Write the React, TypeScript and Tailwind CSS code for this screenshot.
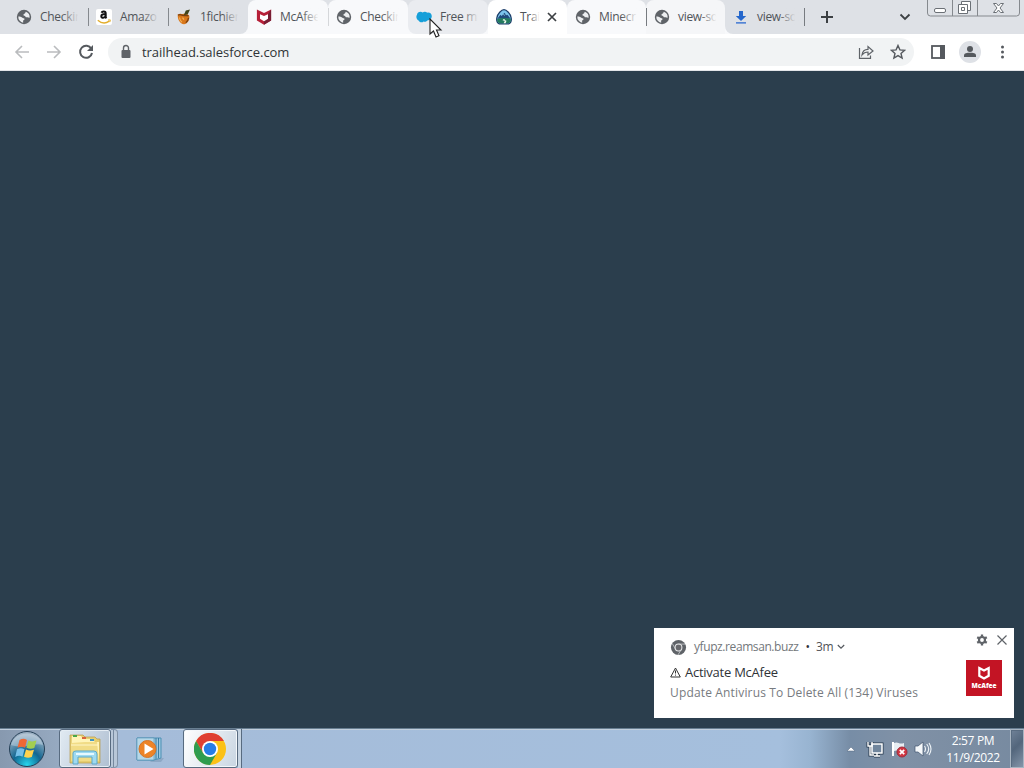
import React from "react";

const Globe = () => (
  <svg viewBox="0 0 16 16" className="h-4 w-4">
    <circle cx="8" cy="8" r="7.2" fill="#5f6368" />
    <path d="M9.800 2.700a5.700 5.700 0 0 1 3.800 6c-1 .1-1.500-.6-2.500-.4-1.300.2-1.800-.4-1.900-1.300-1.500 0-2-.7-1.600-1.700.3-.7 1.200-.5 1.500-1.100Z" fill="#eceef0" />
    <path d="M2.300 7.600c1.700.1 2.700.1 3.700.8 1 .8 2.400.6 2.600 1.700.1 1-1.400 1-1.500 1.900l.1 1.700a5.800 5.800 0 0 1-4.900-6.100Z" fill="#eceef0" />
  </svg>
);

const Amazon = () => (
  <svg viewBox="0 0 16 16" className="h-4 w-4">
    <rect width="16" height="16" rx="2" fill="#fff" />
    <path d="M5.600 3.700C6 2.200 9.700 2 9.700 4.500v3.200c0 .8.3 1.100.8 1.600M9.500 5C7 5 5.300 5.600 5.300 7.300c0 2.200 3.500 2 4.300-.3" fill="none" stroke="#111" strokeWidth="2" />
    <path d="M1.800 11.200c3.500 3.200 8.100 3.200 11.500 1" fill="none" stroke="#e3ae2d" strokeWidth="1.400" />
    <path d="m12 11 2.300-.1-.5 2.200" fill="none" stroke="#e3ae2d" />
  </svg>
);

const Orange = () => (
  <svg viewBox="0 0 16 16" className="h-4 w-4">
    <path d="M1.800 5.800c1.800-1.600 3.400-1.200 5-.7l3.600-.8 2.900 2.500c.6 3.800-1.400 8-5.300 8.500C4 15 1.300 10.300 1.800 5.800Z" fill="#d9781c" />
    <path d="M7.800 6.300 9.800 1.600l4.200-1-2.200 4.600Z" fill="#41451d" />
    <path d="M2 6.300c1.600-1.500 3.200-.4 5.200.1 2.200.6 3.600-.5 5.400.6M9.800 13.700c1.700-1.200 2.500-3 2.700-5" fill="none" stroke="#7d4210" strokeWidth="1.300" />
    <path d="M3.500 8.500c.2 2.200 1 3.500 2.400 4.600M6.500 8.600l1.500 2" fill="none" stroke="#f4b35a" strokeWidth="1.200" />
  </svg>
);

const Shield = () => (
  <svg viewBox="0 0 16 16" className="h-4 w-4">
    <path d="m.9.5 7.100 3.400L15.100.5v11.100L8 15.700.9 11.600Z" fill="#b62038" />
    <path d="m8 12.200 4-2.400V5.200L15.100.5v11.100L8 15.700Z" fill="#781e34" />
    <path d="M4 5.200 8 7l4-1.800v4.600l-4 2.400-4-2.400Z" fill="#fff" />
  </svg>
);

const Cloud = () => (
  <svg viewBox="0 0 16 16" className="h-4 w-4">
    <path d="M1 5.800C1.100 3 4.800 2 6.600 3.400c1.700-1.200 3.600-.8 4.600.3 2.500-.6 4.600 1 4.600 3.600 0 2.800-2.100 4.100-4.400 4.100-1.200 1.500-2.800 1.400-3.800 1-1.400 1.500-4.300 1-5-.9C.7 10.900-.4 7.600 1 5.800Z" fill="#159fd9" />
  </svg>
);

const Trail = () => (
  <svg viewBox="0 0 16 16" className="h-4 w-4">
    <path d="M8 .7c2.400 0 6.700 4.100 7.200 8.300.4 2.700-.2 4.900-2.200 5.800H3C1 13.900.4 11.700.8 9 1.300 4.800 5.600.7 8 .7Z" fill="#7cc3ec" stroke="#1b3c68" strokeWidth="1.200" />
    <path d="m1.400 9.800 3-4 1.300 1.100L8.400 3.700l2.200 2.600.9-.5 3.200 4Z" fill="#214a7c" />
    <path d="m7.200 5.400 1.200.8 1-.6" stroke="#9fd8ef" fill="none" strokeWidth=".8" />
    <path d="M1.200 9.700 8 9l6.800.7-.2 2.700-1.800 1.900H3.200l-1.800-1.900Z" fill="#247b5d" />
    <path d="m7.700 10-1.200 1.200 2.300.9-1.200 2.200h2l.9-2.500-2.100-.8.5-1Z" fill="#f1f9ee" />
  </svg>
);

const Download = () => (
  <svg viewBox="0 0 16 16" className="h-4 w-4">
    <path d="M6 2h4v5h3.200L8 12 2.800 7H6Z" fill="#2567cc" />
    <path d="M3 13h10v1.700H3Z" fill="#5485d5" />
  </svg>
);

const tabs = [
  { icon: <Globe />, label: "Checkin", bg: "", fade: "to-[#dee1e6]", sep: "border-[#85898e]" },
  { icon: <Amazon />, label: "Amazo", bg: "", fade: "to-[#dee1e6]", sep: "border-[#85898e]" },
  { icon: <Orange />, label: "1fichier", bg: "bg-[#dee1e6] rounded-br-lg", fade: "to-[#dee1e6]", sep: "border-transparent" },
  { icon: <Shield />, label: "McAfee", bg: "bg-[#f8f9fb] rounded-t-lg", fade: "to-[#f8f9fb]", sep: "border-[#d5d7da]" },
  { icon: <Globe />, label: "Checkin", bg: "bg-[#f8f9fb] rounded-t-lg", fade: "to-[#f8f9fb]", sep: "border-transparent" },
  { icon: <Cloud />, label: "Free mi", bg: "bg-[#eaecf0] rounded-lg", fade: "to-[#eaecf0]", sep: "border-transparent" },
  { icon: <Trail />, label: "Trai", bg: "bg-white rounded-t-lg", fade: "to-white", sep: "border-transparent", active: true },
  { icon: <Globe />, label: "Minecr", bg: "bg-[#f8f9fb] rounded-t-lg", fade: "to-[#f8f9fb]", sep: "border-[#777b80]" },
  { icon: <Globe />, label: "view-so", bg: "bg-[#f5f6f8] rounded-t-lg", fade: "to-[#f5f6f8]", sep: "border-transparent" },
  { icon: <Download />, label: "view-so", bg: "bg-[#dee1e6] rounded-bl-lg", fade: "to-[#dee1e6]", sep: "border-[#777b80]" },
];

function TabStrip() {
  return (
    <div className="flex h-[34px] shrink-0 bg-[#dee1e6] pl-2">
      {tabs.map((t, i) => (
        <div key={i} className={`flex shrink-0 ${i < 6 ? "w-[80px]" : "w-[79px]"} ${i >= 2 ? "bg-[linear-gradient(#dee1e6_8px,#f8f9fb_8px)]" : ""}`}>
          <div className={`relative flex min-w-0 flex-1 items-center pl-2 ${t.bg}`}>
            <div className="shrink-0">{t.icon}</div>
            <div className={`relative ml-2 whitespace-nowrap text-[12px] leading-[18px] tracking-[-0.3px] text-[#505459] ${t.active ? "w-[19px]" : "w-[40px]"}`}>
              {t.label}
              <span className={`absolute inset-y-0 right-[-4px] bg-gradient-to-r from-transparent to-75% ${t.active ? "w-[13px]" : "w-[22px]"} ${t.fade}`} />
            </div>
            {t.active && (
              <svg className="relative ml-[7px] h-3 w-3 shrink-0" viewBox="0 0 12 12"><path d="m2 2 8 8M10 2l-8 8" stroke="#3c4043" strokeWidth="1.700" /></svg>
            )}
            <span className={`absolute right-[-1px] top-2 z-10 h-[18px] border-l ${t.sep}`} />
          </div>
        </div>
      ))}
      <svg className="ml-[15px] mt-[9px] h-4 w-4 shrink-0" viewBox="0 0 16 16"><path d="M8 2v12M2 8h12" stroke="#3c4043" strokeWidth="2" /></svg>
      <svg className="ml-[62px] mt-[9px] h-4 w-4 shrink-0" viewBox="0 0 16 16"><path d="m3.500 5.500 4.500 4.500 4.500-4.500" fill="none" stroke="#3c4043" strokeWidth="1.800" /></svg>
      <svg className="ml-[14px] h-[17px] w-[93px] shrink-0" viewBox="0 0 93 17" fill="none" stroke="#6b7076">
        <path d="M.5 0v13a3 3 0 0 0 3 3h86a3 3 0 0 0 3-3V0M25.500 0v16M50.500 0v16" stroke="#85898e" />
        <rect x="7.500" y="8.500" width="11" height="4" rx="1.500" fill="#fff" />
        <path d="M34.500 1.500h9v9h-9Z" fill="#fff" />
        <path d="M31.500 4.500h9v9h-9Z" fill="#fff" />
        <path d="M34.500 7.500h3v3h-3Z" />
        <path d="M66.500 3.500h3l2 2.500 2-2.500h3L73 8l3.500 4.500h-3l-2-2.500-2 2.500h-3L70 8Z" fill="#fff" />
      </svg>
    </div>
  );
}

function Toolbar() {
  return (
    <div className="flex h-[37px] shrink-0 items-center border-b border-[#e2e5e8] bg-white pl-[14px]">
      <svg className="h-4 w-4" viewBox="0 0 16 16"><path d="M15 8H2M8 2 2 8l6 6" fill="none" stroke="#babcbe" strokeWidth="1.600" /></svg>
      <svg className="ml-4 h-4 w-4" viewBox="0 0 16 16"><path d="M1 8h13M8 2l6 6-6 6" fill="none" stroke="#babcbe" strokeWidth="1.600" /></svg>
      <svg className="ml-4 h-4 w-4" viewBox="0 0 16 16"><path d="M13.300 4.800A6 6 0 1 0 14 9" fill="none" stroke="#55595e" strokeWidth="2" /><path d="M15 1v6H9Z" fill="#55595e" /></svg>
      <div className="ml-[14px] flex h-7 w-[806px] items-center rounded-full bg-[#f1f3f4] pl-[10px] pr-[8px]">
        <svg className="h-4 w-4" viewBox="0 0 16 16"><path d="M5.500 7V4a2.500 2.500 0 0 1 5 0v3" fill="none" stroke="#5f6368" strokeWidth="1.400" /><rect x="3.500" y="6" width="9" height="8" rx="1" fill="#5f6368" /></svg>
        <span className="ml-[8px] whitespace-nowrap text-[13px] leading-5 tracking-[-0.04px] text-[#303337]">trailhead.salesforce.com</span>
        <svg className="ml-auto h-4 w-4" viewBox="0 0 16 16" fill="none" stroke="#5f6368" strokeWidth="1.200"><path d="M1.500 4v10.400h11V11.500M4 11c.5-4 2.500-5.600 6-5.600V2.500L15 7l-5 4V8C7.500 8 5.500 9 4 11Z" /></svg>
        <svg className="ml-4 h-4 w-4" viewBox="0 0 16 16"><path d="m8 1.500 1.900 4.400 4.700.4L11 9.400l1.100 4.700L8 11.600l-4.100 2.500L5 9.400 1.400 6.300l4.700-.4Z" fill="none" stroke="#55595e" strokeWidth="1.400" /></svg>
      </div>
      <svg className="ml-4 h-4 w-4" viewBox="0 0 16 16"><rect x="2" y="2" width="12" height="12" fill="#fff" stroke="#55595e" strokeWidth="1.800" /><path d="M10 1h5v14h-5Z" fill="#55595e" /></svg>
      <div className="ml-[13px] flex h-[22px] w-[22px] items-center justify-center rounded-full bg-[#dee1e6]">
        <svg className="h-4 w-4" viewBox="0 0 16 16" fill="#55595e"><circle cx="8" cy="5" r="3" /><path d="M2 13v-1.500C2 9 5 8.700 8 8.700s6 .3 6 2.800V13Z" /></svg>
      </div>
      <svg className="ml-[13px] h-4 w-4" viewBox="0 0 16 16" fill="#55595e"><circle cx="8.500" cy="3" r="1.500" /><circle cx="8.500" cy="8" r="1.500" /><circle cx="8.500" cy="13" r="1.500" /></svg>
    </div>
  );
}

function Notification() {
  return (
    <section className="absolute bottom-[50px] right-[10px] flex h-[90px] w-[360px] bg-white pl-4 pr-3">
      <div className="min-w-0 flex-1 whitespace-nowrap">
        <div className="mt-[9px] flex h-5 items-center text-[12px] text-[#73777b]">
          <svg className="mr-[7px] h-[17px] w-[17px]" viewBox="0 0 18 18"><circle cx="9" cy="9" r="8" fill="#5f6368" /><circle cx="9" cy="9" r="3.600" fill="#68696d" stroke="#e8e9eb" strokeWidth="1.100" /><path d="M9 5.400h7M6 11 2.500 5M11.700 11.400 8.400 17" stroke="#d2d4d6" strokeWidth=".8" /></svg>
          <span className="tracking-[-0.41px]">yfupz.reamsan.buzz</span>
          <span className="ml-[7px] text-[#303337]">•</span>
          <span className="ml-[6px] tracking-[-0.3px] text-[#505357]">3m</span>
          <svg className="ml-1 h-2 w-2" viewBox="0 0 8 8"><path d="m.8 2 3.200 3.200L7.200 2" fill="none" stroke="#55595e" strokeWidth="1.200" /></svg>
        </div>
        <div className="mt-[6px] flex h-[18px] items-center text-[13px] leading-[18px] text-[#303337]">
          <svg className="mr-[4px] h-[11px] w-[11px]" viewBox="0 0 11 11"><path d="M5.500 1 10.300 10H.7Z" fill="none" stroke="#333" /><path d="M5.500 3.500v3M5.500 7.600v1" stroke="#333" /></svg>
          <span className="tracking-[-0.25px]">Activate McAfee</span>
        </div>
        <div className="mt-[3px] text-[12px] leading-[18px] tracking-[0.16px] text-[#777b80]">Update Antivirus To Delete All (134) Viruses</div>
      </div>
      <div className="flex w-[38px] flex-col items-end">
        <div className="mr-[-6px] mt-[6px] flex gap-[8px]">
          <svg className="h-3 w-3" viewBox="0 0 12 12"><circle cx="6" cy="6" r="3" fill="none" stroke="#5f6368" strokeWidth="2.200" /><path d="M6 .5v2M6 9.500v2M1.200 3.200l1.800 1M9 7.800l1.800 1M1.200 8.800 3 7.800M9 4.200l1.800-1" stroke="#5f6368" strokeWidth="2.300" /></svg>
          <svg className="h-3 w-3" viewBox="0 0 12 12"><path d="m1.500 1.500 9 9M10.500 1.500l-9 9" stroke="#5f6368" strokeWidth="1.200" /></svg>
        </div>
        <div className="mt-[14px] flex h-9 w-9 flex-col items-center bg-[#c31424] text-white">
          <svg className="mt-[6px] h-[14px] w-[12px]" viewBox="0 0 12 14"><path d="m1.300 2 4.700 2.500L10.700 2v7.800L6 12.500 1.300 9.800Z" fill="none" stroke="#fff" strokeWidth="2.200" /></svg>
          <span className="mt-px text-[6.500px] font-extrabold leading-[9px]">McAfee</span>
        </div>
      </div>
    </section>
  );
}

function StartLogo() {
  return (
    <svg className="ml-2 h-[38px] w-[38px] shrink-0" viewBox="0 0 38 38">
      <defs><radialGradient id="orb" cx=".5" cy=".95" r=".85"><stop stopColor="#26d6ed" /><stop offset=".48" stopColor="#126691" /><stop offset="1" stopColor="#9cb1c4" /></radialGradient></defs>
      <circle cx="19" cy="19" r="17.500" fill="url(#orb)" stroke="#253f56" />
      <path d="M3 15C7-.5 31-.5 35 15c-9-3-17 5-32 0Z" fill="#d9e6ef" opacity=".4" />
      <path d="M11.500 10c3-1.600 5-1.400 7.500-.1l-2 7.800c-2.500-1.300-4.700-1.200-7.500 0Z" fill="#ee6835" />
      <path d="M20.500 10.500c3 1.300 5 1 8 .1l-2.200 7.500c-3 1-5 .7-7.800-.3Z" fill="#a3ce50" />
      <path d="M9 19.300c3-1.500 5-1.300 7.500-.1l-2 7.600c-2.500-1.500-4.700-1-7.300.1Z" fill="#75bfe8" />
      <path d="M18 19.500c2.700 1.300 5 1.200 8 .3L23.800 27c-2.700 1-5 .9-7.800-.2Z" fill="#ffd34e" />
    </svg>
  );
}

const Folder = () => (
  <svg className="h-8 w-8" viewBox="0 0 32 32">
    <path d="M1 5V2h13l2 2h10l2 2h3v24H1Z" fill="#e6ce70" stroke="#b59a4c" strokeWidth=".7" />
    <path d="M3 3h9l2 3h9l3 3h4v19H2Z" fill="#fff4b8" />
    <path d="M4 2h4v2H4Z" fill="#49a948" /><path d="M13 4h4v2h-4Z" fill="#d9633d" /><path d="M21 6h4v2h-4Z" fill="#3f96c6" />
    <path d="M2 10 16 9h12l2 19H2Z" fill="#f1dc86" /><path d="M2 12h27" stroke="#fff6c8" />
    <path d="M4 31V20q0-2 3-2h18q3 0 3 3v10h-5v-7H9v7Z" fill="#9fdaf0" stroke="#5ba8cb" /><path d="M7 21h18" stroke="#e6f9ff" strokeWidth="2" />
  </svg>
);

const Chrome = () => (
  <svg className="h-8 w-8" viewBox="0 0 32 32">
    <circle cx="16" cy="16" r="16" fill="#fbc116" />
    <path d="M2.100 8A16 16 0 0 1 29.900 8H16L9.100 20Z" fill="#df3f32" />
    <path d="M2.100 8 9.100 20l6.900 4 6.900-4-6.900 12A16 16 0 0 1 2.100 8Z" fill="#2f9c4f" />
    <circle cx="16" cy="16" r="8" fill="#fff" /><circle cx="16" cy="16" r="6.200" fill="#277de6" />
  </svg>
);

function Taskbar() {
  return (
    <footer className="flex h-10 shrink-0 items-center overflow-hidden border-t border-[#687e91] bg-[linear-gradient(90deg,#8799af_0,#95a8bf_54px,#a5bcd9_120px,#a5bfdd_780px,#98b4d1_810px,#778da6_850px,#8091a6_900px,#778aa0_1024px)] shadow-[inset_0_1px_#c1cedc]">
      <StartLogo />
      <div className="ml-[13px] flex h-[39px] w-[52px] shrink-0 items-center justify-center rounded-[3px] border border-[#586b80] bg-[linear-gradient(110deg,#e1eaf2,#b0c0d2)] shadow-[inset_0_0_0_1px_#e5edf4]"><Folder /></div>
      <div className="flex h-[39px] w-[7px] shrink-0 rounded-r-sm border-y border-r border-[#8293a8] bg-[#b8c7d8]"><span className="ml-[2px] border-l border-[#75889e]" /></div>
      <svg className="ml-[18px] h-7 w-7 shrink-0" viewBox="0 0 28 28">
        <path d="M18 23h10l-3 4H14Z" fill="#6c89a8" opacity=".4" />
        <path d="M1 3h24v20L18 25H1Z" fill="#9bc6de" stroke="#4d91b4" /><path d="M20 3v21M22.500 3v20" stroke="#397ea5" />
        <path d="M1 3h17v22H1Z" fill="#b5d7e8" stroke="#4d91b4" strokeWidth=".6" /><circle cx="11.500" cy="14" r="8.500" fill="#ed8427" stroke="#d2762b" />
        <path d="m8.500 8.500 9 5.500-9 5.500Z" fill="#fff" />
      </svg>
      <div className="ml-[19px] flex h-[39px] w-[55px] shrink-0 items-center justify-center rounded-[3px] border border-[#586b80] bg-[linear-gradient(110deg,#fff,#c8d5e2)] pr-[2px] shadow-[inset_0_0_0_1px_#f4f8fb]"><Chrome /></div>
      <div className="h-[39px] w-1 shrink-0 border-r border-[#586b80] bg-[#c5d3e1]" />
      <svg className="ml-auto h-4 w-4 shrink-0" viewBox="0 0 16 16"><path d="m4 10 4-4 4 4Z" fill="#fff" stroke="#52657c" strokeWidth=".5" /></svg>
      <svg className="ml-[7px] h-[18px] w-[18px] shrink-0" viewBox="0 0 18 18"><path d="M6 4h10v9H6ZM8 16h6M11 13v3M2 2v4h4V2M4 6v9h4" fill="none" stroke="#26384c" strokeWidth="3" /><path d="M6 4h10v9H6Z" fill="#71869d" stroke="#fff" strokeWidth="1.500" /><path d="M8 16h6M11 13v3M2 2v4h4V2M4 6v9h4" stroke="#fff" fill="none" strokeWidth="1.400" /></svg>
      <svg className="ml-[6px] h-[18px] w-[18px] shrink-0" viewBox="0 0 18 18"><path d="M3 2v14" stroke="#fff" strokeWidth="2" /><path d="M4 3c4-2 5 2 10 0v8c-5 2-6-2-10 0Z" fill="#e7edf2" /><circle cx="12" cy="12" r="5" fill="#d13642" stroke="#9e2c3b" /><path d="m9.800 9.800 4.400 4.400m0-4.400-4.400 4.400" stroke="#fff" strokeWidth="1.700" /></svg>
      <svg className="ml-[6px] h-[18px] w-[18px] shrink-0" viewBox="0 0 18 18"><path d="M1 6h3l5-4v14l-5-4H1Z" fill="#f5f8fa" stroke="#40556d" strokeWidth=".7" /><path d="M10.500 6q2 3 0 6M12.700 4q4 5 0 10M15 3q4 6 0 12" fill="none" stroke="#eff4f8" strokeWidth="1.100" /></svg>
      <div className="ml-[5px] w-[72px] shrink-0 text-center text-[12px] leading-[17px] tracking-[-0.35px] text-white"><div>2:57 PM</div><div>11/9/2022</div></div>
      <div className="ml-px h-[39px] w-[14px] shrink-0 border border-[#a8b5c2] bg-[linear-gradient(135deg,#708298,#53667c_45%,#8495a9)] shadow-[inset_1px_1px_#596c81]" />
    </footer>
  );
}

export default function App() {
  return (
    <div className='relative flex h-[768px] w-[1024px] flex-col overflow-hidden bg-[#2b3e4d] font-["Open_Sans","Noto_Sans",sans-serif]'>
      <TabStrip />
      <Toolbar />
      <main className="min-h-0 flex-1 bg-[#2b3e4d]" />
      <Taskbar />
      <Notification />
      <svg className="absolute left-[429px] top-[18px] z-20 h-[20px] w-[14px]" viewBox="0 0 14 20"><path d="M1 1v15l3.500-3 2.500 6 3-1.300L7.500 12H12Z" fill="#fff" stroke="#222" strokeWidth="1.100" /></svg>
    </div>
  );
}
